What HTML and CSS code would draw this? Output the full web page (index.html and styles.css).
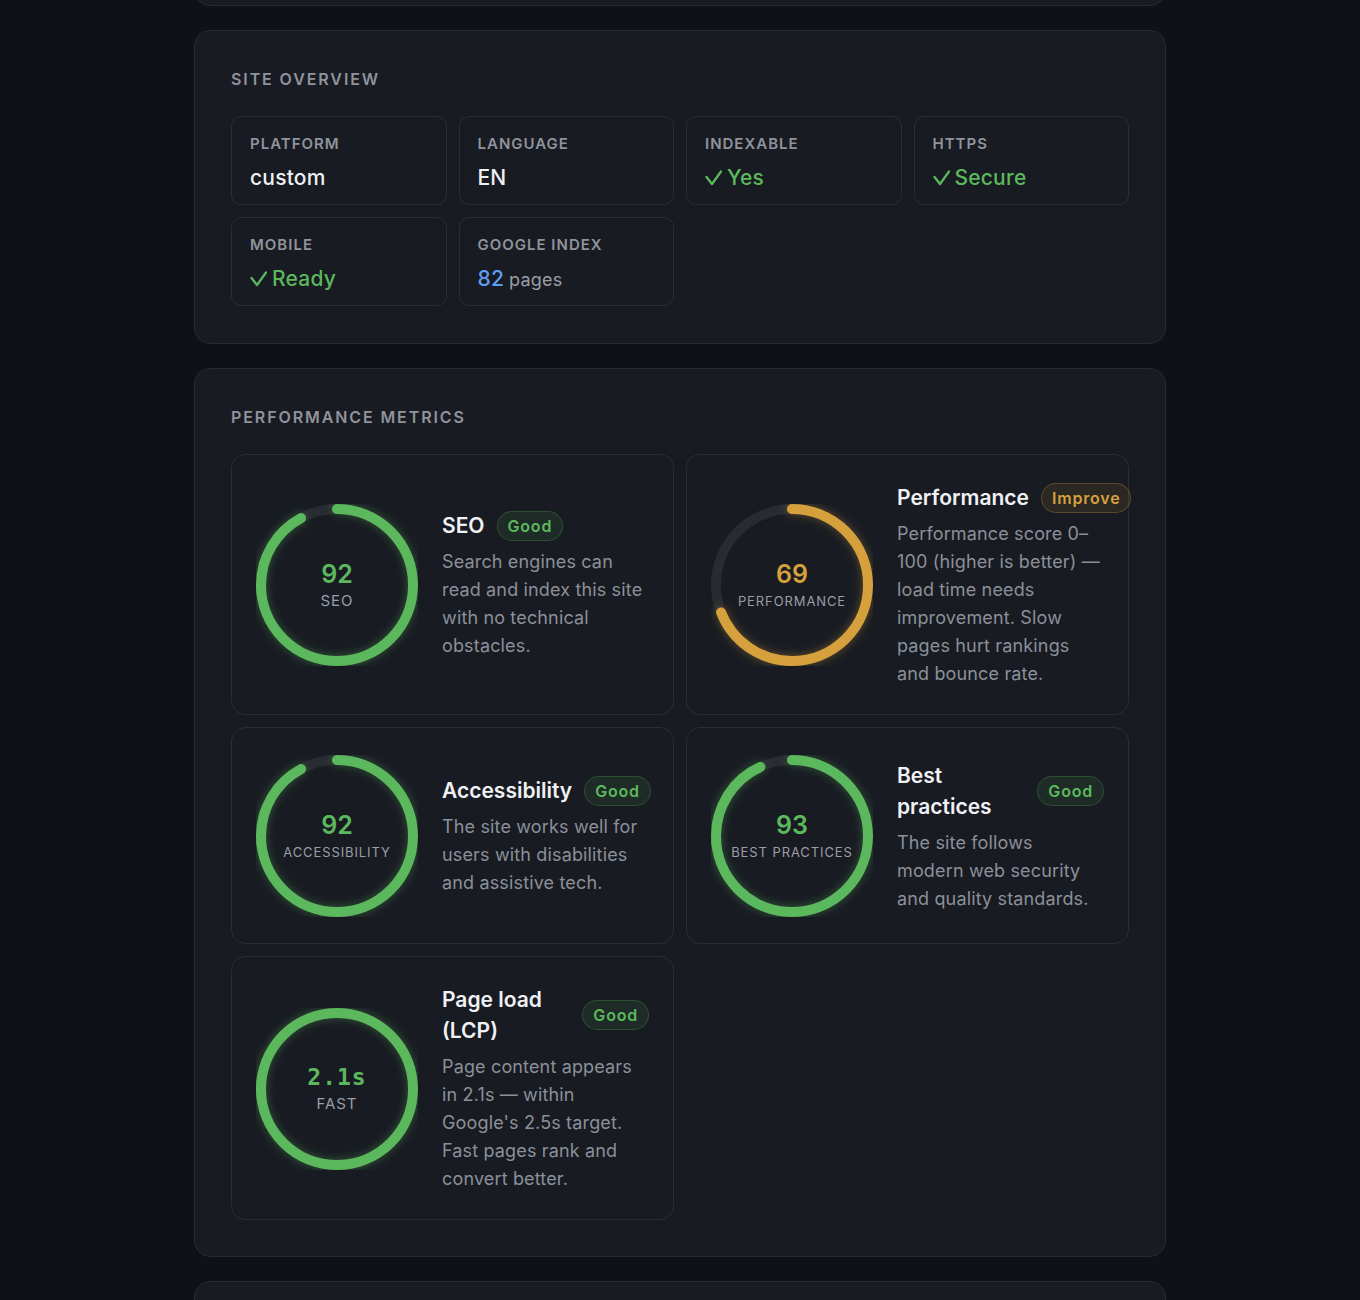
FILE: index.html
```html
<!DOCTYPE html>
<html lang="en">
<head>
<meta charset="utf-8">
<title>Site report</title>
<link rel="stylesheet" href="styles.css">
</head>
<body>
<div class="page">
  <section class="panel panel-stub-top"></section>

  <section class="panel panel-overview">
    <h2 class="panel-title">Site overview</h2>
    <div class="overview-grid">
      <div class="stat">
        <div class="stat-label">Platform</div>
        <div class="stat-value">custom</div>
      </div>
      <div class="stat">
        <div class="stat-label">Language</div>
        <div class="stat-value">EN</div>
      </div>
      <div class="stat">
        <div class="stat-label">Indexable</div>
        <div class="stat-value ok"><svg class="check" viewBox="0 0 17 16" width="17" height="16"><polyline points="1.5,7 7,14 16,1.5"/></svg>Yes</div>
      </div>
      <div class="stat">
        <div class="stat-label">HTTPS</div>
        <div class="stat-value ok"><svg class="check" viewBox="0 0 17 16" width="17" height="16"><polyline points="1.5,7 7,14 16,1.5"/></svg>Secure</div>
      </div>
      <div class="stat">
        <div class="stat-label">Mobile</div>
        <div class="stat-value ok"><svg class="check" viewBox="0 0 17 16" width="17" height="16"><polyline points="1.5,7 7,14 16,1.5"/></svg>Ready</div>
      </div>
      <div class="stat">
        <div class="stat-label">Google index</div>
        <div class="stat-value"><span class="num-blue">82</span><span class="unit">pages</span></div>
      </div>
    </div>
  </section>

  <section class="panel">
    <h2 class="panel-title">Performance metrics</h2>
    <div class="metrics-grid">

      <div class="metric">
        <div class="ring ring-good">
          <svg class="ring-svg" viewBox="0 0 162 162" width="162" height="162">
            <circle class="ring-track" cx="81" cy="81" r="76"/>
            <circle class="ring-bar" cx="81" cy="81" r="76" stroke-dasharray="439.3 477.5" transform="rotate(-90 81 81)"/>
          </svg>
          <div class="ring-center">
            <div class="ring-value">92</div>
            <div class="ring-label">SEO</div>
          </div>
        </div>
        <div class="metric-body">
          <div class="metric-head">
            <h3 class="metric-title">SEO</h3>
            <span class="badge badge-good">Good</span>
          </div>
          <p class="metric-desc">Search engines can read and index this site with no technical obstacles.</p>
        </div>
      </div>

      <div class="metric">
        <div class="ring ring-warn">
          <svg class="ring-svg" viewBox="0 0 162 162" width="162" height="162">
            <circle class="ring-track" cx="81" cy="81" r="76"/>
            <circle class="ring-bar" cx="81" cy="81" r="76" stroke-dasharray="329.5 477.5" transform="rotate(-90 81 81)"/>
          </svg>
          <div class="ring-center">
            <div class="ring-value">69</div>
            <div class="ring-label small">Performance</div>
          </div>
        </div>
        <div class="metric-body">
          <div class="metric-head">
            <h3 class="metric-title">Performance</h3>
            <span class="badge badge-warn">Improve</span>
          </div>
          <p class="metric-desc">Performance score 0–100 (higher is better) — load time needs improvement. Slow pages hurt rankings and bounce rate.</p>
        </div>
      </div>

      <div class="metric">
        <div class="ring ring-good">
          <svg class="ring-svg" viewBox="0 0 162 162" width="162" height="162">
            <circle class="ring-track" cx="81" cy="81" r="76"/>
            <circle class="ring-bar" cx="81" cy="81" r="76" stroke-dasharray="439.3 477.5" transform="rotate(-90 81 81)"/>
          </svg>
          <div class="ring-center">
            <div class="ring-value">92</div>
            <div class="ring-label small">Accessibility</div>
          </div>
        </div>
        <div class="metric-body">
          <div class="metric-head">
            <h3 class="metric-title">Accessibility</h3>
            <span class="badge badge-good">Good</span>
          </div>
          <p class="metric-desc">The site works well for users with disabilities and assistive tech.</p>
        </div>
      </div>

      <div class="metric">
        <div class="ring ring-good">
          <svg class="ring-svg" viewBox="0 0 162 162" width="162" height="162">
            <circle class="ring-track" cx="81" cy="81" r="76"/>
            <circle class="ring-bar" cx="81" cy="81" r="76" stroke-dasharray="444.1 477.5" transform="rotate(-90 81 81)"/>
          </svg>
          <div class="ring-center">
            <div class="ring-value">93</div>
            <div class="ring-label small">Best practices</div>
          </div>
        </div>
        <div class="metric-body">
          <div class="metric-head">
            <h3 class="metric-title">Best practices</h3>
            <span class="badge badge-good">Good</span>
          </div>
          <p class="metric-desc">The site follows modern web security and quality standards.</p>
        </div>
      </div>

      <div class="metric">
        <div class="ring ring-good">
          <svg class="ring-svg" viewBox="0 0 162 162" width="162" height="162">
            <circle class="ring-track" cx="81" cy="81" r="76"/>
            <circle class="ring-bar" cx="81" cy="81" r="76" stroke-dasharray="477.5 477.5" transform="rotate(-90 81 81)"/>
          </svg>
          <div class="ring-center">
            <div class="ring-value mono">2.1s</div>
            <div class="ring-label">Fast</div>
          </div>
        </div>
        <div class="metric-body">
          <div class="metric-head">
            <h3 class="metric-title">Page load (LCP)</h3>
            <span class="badge badge-good">Good</span>
          </div>
          <p class="metric-desc">Page content appears in 2.1s — within Google's 2.5s target. Fast pages rank and convert better.</p>
        </div>
      </div>

    </div>
  </section>

  <section class="panel panel-stub-bottom"></section>
</div>
</body>
</html>
```

FILE: styles.css
```css
* { box-sizing: border-box; }

html, body {
  margin: 0;
  padding: 0;
  background: #0e1116;
}

body {
  font-family: Inter, "Noto Sans", "Liberation Sans", sans-serif;
  color: #eceef2;
  overflow: hidden;
}

.page {
  width: 972px;
  margin: 0 auto;
  display: flex;
  flex-direction: column;
  gap: 24px;
}

.panel {
  background: #181b22;
  border: 1px solid #272a31;
  border-radius: 16px;
  padding: 36px;
}

.panel-overview {
  padding-bottom: 37px;
}

.panel-stub-top {
  margin-top: -40px;
  height: 46px;
  padding: 0;
}

.panel-stub-bottom {
  height: 80px;
  padding: 0;
}

.panel-title {
  margin: 0 0 25px;
  font-size: 16px;
  line-height: 24px;
  font-weight: 600;
  letter-spacing: 1.9px;
  text-transform: uppercase;
  color: #8f939c;
}

/* Site overview */
.overview-grid {
  display: grid;
  grid-template-columns: repeat(4, minmax(0, 1fr));
  gap: 12px;
}

.stat {
  border: 1px solid #2a2d35;
  border-radius: 10px;
  padding: 16px 18px 12px;
}

.stat-label {
  font-size: 15px;
  line-height: 22px;
  font-weight: 600;
  letter-spacing: 1px;
  text-transform: uppercase;
  color: #8f939c;
}

.stat-value {
  margin-top: 9px;
  font-size: 21px;
  line-height: 28px;
  font-weight: 500;
  letter-spacing: 0.2px;
  color: #eef0f3;
  display: flex;
  align-items: center;
}

.stat-value.ok { color: #5cb85c; }

.check {
  flex-shrink: 0;
  margin-right: 5px;
  fill: none;
  stroke: #5cb85c;
  stroke-width: 2.3;
  stroke-linecap: round;
  stroke-linejoin: round;
}

.num-blue {
  color: #5e9ff2;
  margin-right: 5px;
}

.unit {
  font-size: 18px;
  font-weight: 400;
  color: #9a9ea7;
  position: relative;
  top: 1px;
}

/* Metrics */
.metrics-grid {
  display: grid;
  grid-template-columns: repeat(2, minmax(0, 1fr));
  gap: 12px;
}

.metric {
  display: flex;
  align-items: center;
  gap: 24px;
  border: 1px solid #2a2d35;
  border-radius: 14px;
  padding: 27px 24px 26px;
  min-width: 0;
}

.ring {
  flex: 0 0 162px;
  width: 162px;
  height: 162px;
  display: grid;
  place-items: center;
}

.ring > * { grid-area: 1 / 1; }

.ring-svg {
  display: block;
  overflow: hidden;
}

.ring-track {
  fill: none;
  stroke: #282b31;
  stroke-width: 10;
}

.ring-bar {
  fill: none;
  stroke-width: 10;
  stroke-linecap: round;
}

.ring-good .ring-bar {
  stroke: #5cb85c;
  filter: drop-shadow(0 0 5px rgba(92, 184, 92, 0.4));
}

.ring-warn .ring-bar {
  stroke: #d6a03c;
  filter: drop-shadow(0 0 5px rgba(214, 160, 60, 0.4));
}

.ring-center {
  text-align: center;
}

.ring-value {
  font-size: 25px;
  line-height: 28px;
  font-weight: 600;
}

.ring-good .ring-value { color: #5cb85c; }
.ring-warn .ring-value { color: #d6a03c; }

.ring-value.mono {
  font-family: "DejaVu Sans Mono", "Liberation Mono", monospace;
  font-size: 23px;
  letter-spacing: 1px;
}

.ring-label {
  margin-top: 3px;
  font-size: 15px;
  line-height: 20px;
  letter-spacing: 1px;
  text-transform: uppercase;
  color: #9a9ea7;
}

.ring-label.small {
  font-size: 13px;
  letter-spacing: 0.9px;
}

.metric-body {
  flex: 1 1 auto;
  min-width: 0;
}

.metric-head {
  display: flex;
  align-items: center;
  gap: 12px;
}

.metric-title {
  margin: 0;
  font-size: 21px;
  line-height: 31px;
  font-weight: 600;
  color: #f0f1f4;
}

.badge {
  flex-shrink: 0;
  height: 30px;
  padding: 0 10px;
  border-radius: 15px;
  font-size: 16px;
  line-height: 28px;
  font-weight: 600;
  letter-spacing: 0.8px;
  border: 1px solid;
}

.badge-good {
  color: #5cb85c;
  background: rgba(92, 184, 92, 0.1);
  border-color: rgba(92, 184, 92, 0.25);
}

.badge-warn {
  color: #d6a03c;
  background: rgba(214, 160, 60, 0.1);
  border-color: rgba(214, 160, 60, 0.28);
}

.metric-desc {
  margin: 7px 0 0;
  font-size: 18px;
  line-height: 28px;
  color: #8b9099;
  letter-spacing: 0.15px;
}
```
